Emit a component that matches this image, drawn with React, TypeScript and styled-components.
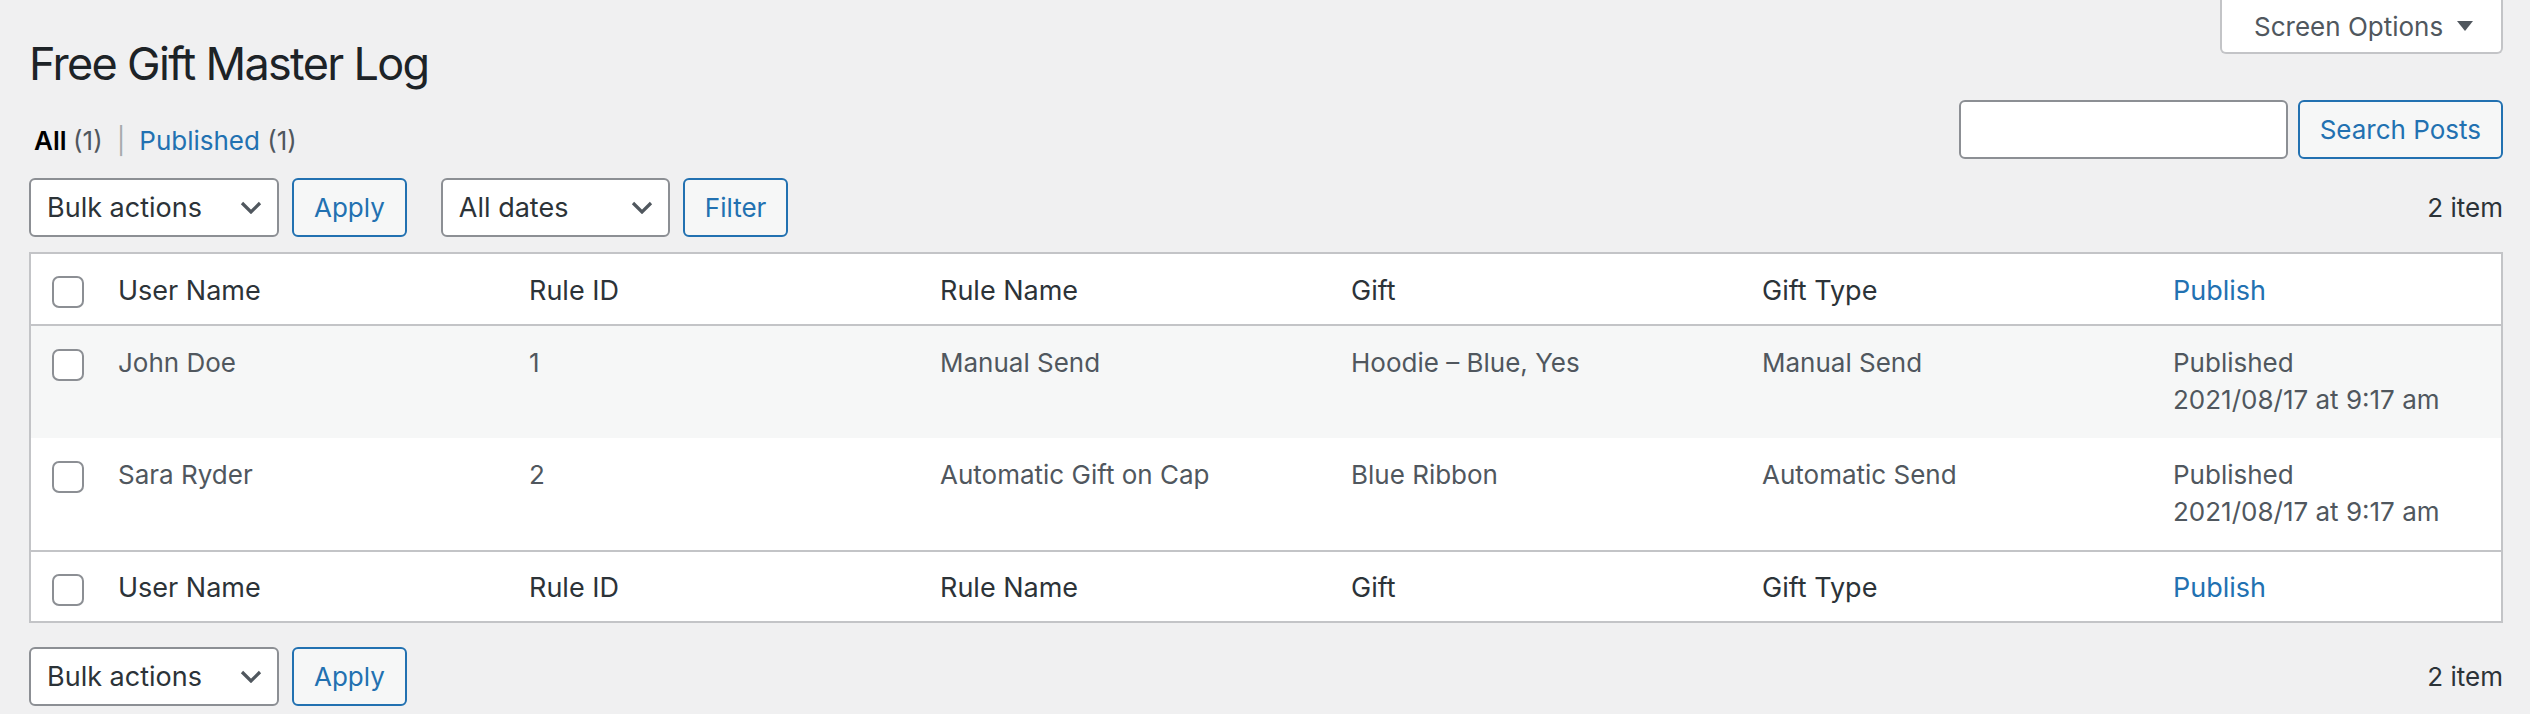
import React from "react";
import styled, { createGlobalStyle } from "styled-components";

const GlobalStyle = createGlobalStyle`
  html, body {
    margin: 0;
    padding: 0;
    background: #f0f0f1;
  }
  body {
    font-family: Inter, "Noto Sans", sans-serif;
    font-size: 26px;
    color: #3c434a;
  }
  * {
    box-sizing: border-box;
  }
`;

const Wrap = styled.div`
  padding: 0 27px 0 29px;
  min-height: 714px;
`;

const HeaderRow = styled.div`
  display: flex;
  justify-content: space-between;
  align-items: flex-start;
`;

const Title = styled.h1`
  margin: 0;
  padding-top: 35px;
  font-size: 45px;
  line-height: 58px;
  font-weight: 400;
  letter-spacing: -1.7px;
  color: #1d2327;
`;

const ScreenOptions = styled.button`
  display: flex;
  align-items: center;
  gap: 14px;
  width: 283px;
  height: 54px;
  padding: 0 0 0 32px;
  background: #fff;
  border: 2px solid #c3c4c7;
  border-top: none;
  border-radius: 0 0 6px 6px;
  font-family: inherit;
  font-size: 26px;
  line-height: 31px;
  color: #50575e;
  cursor: pointer;
`;

const SearchRow = styled.div`
  display: flex;
  justify-content: space-between;
  align-items: flex-start;
  margin-top: 7px;
`;

const Views = styled.ul`
  display: flex;
  margin: 0;
  padding: 23px 0 0 5px;
  list-style: none;
  line-height: 36px;
`;

const ViewItem = styled.li<{ $current?: boolean }>`
  color: ${(p) => (p.$current ? "#000" : "#2271b1")};
  font-weight: ${(p) => (p.$current ? 600 : 400)};
`;

const Count = styled.span`
  color: #50575e;
  font-weight: 400;
`;

const Sep = styled.span`
  margin: 0 14px;
  color: #a7aaad;
`;

const SearchBox = styled.div`
  display: flex;
  gap: 10px;
`;

const SearchInput = styled.input`
  width: 329px;
  height: 59px;
  border: 2px solid #8c8f94;
  border-radius: 6px;
  background: #fff;
  font-family: inherit;
  font-size: 26px;
  padding: 0 16px;
`;

const Button = styled.button`
  height: 59px;
  padding: 0 20px;
  border: 2px solid #2271b1;
  border-radius: 6px;
  background: #f6f7f7;
  color: #2271b1;
  font-family: inherit;
  font-size: 26px;
  cursor: pointer;
  white-space: nowrap;
`;

const TableNav = styled.div<{ $top?: boolean }>`
  display: flex;
  align-items: center;
  height: 59px;
  margin-top: ${(p) => (p.$top ? "19px" : "24px")};
`;

const Group = styled.div<{ $gapLeft?: number }>`
  display: flex;
  gap: 13px;
  margin-left: ${(p) => p.$gapLeft ?? 0}px;
`;

const Select = styled.div<{ $width: number }>`
  display: flex;
  align-items: center;
  justify-content: space-between;
  width: ${(p) => p.$width}px;
  height: 59px;
  padding: 0 15px 0 16px;
  border: 2px solid #8c8f94;
  border-radius: 6px;
  background: #fff;
  font-size: 27px;
  color: #2c3338;
`;

const ItemCount = styled.div`
  margin-left: auto;
  line-height: 39px;
  color: #2c3338;
`;

const Table = styled.table`
  width: 100%;
  margin-top: 15px;
  table-layout: fixed;
  border-collapse: separate;
  border-spacing: 0;
  background: #fff;
  border: 2px solid #c3c4c7;
`;

const HeadCell = styled.th<{ $foot?: boolean }>`
  padding: ${(p) => (p.$foot ? "18px" : "19px")} 20px 16px;
  text-align: left;
  font-size: 27px;
  line-height: 35px;
  font-weight: 400;
  color: #2c3338;
  vertical-align: top;
  border-bottom: ${(p) => (p.$foot ? "none" : "2px solid #c3c4c7")};
  border-top: ${(p) => (p.$foot ? "2px solid #c3c4c7" : "none")};
`;

const CheckHead = styled(HeadCell)`
  padding: 22px 0 0 21px;
`;

const SortLink = styled.span`
  color: #2271b1;
`;

const Row = styled.tr<{ $alt?: boolean }>`
  background: ${(p) => (p.$alt ? "#f6f7f7" : "#fff")};
`;

const Cell = styled.td`
  padding: 18px 20px 20px;
  font-size: 26px;
  line-height: 37px;
  color: #50575e;
  vertical-align: top;
`;

const CheckCell = styled.td`
  padding: 23px 0 0 21px;
  vertical-align: top;
`;

const Checkbox = styled.span`
  display: block;
  width: 32px;
  height: 32px;
  border: 2px solid #8c8f94;
  border-radius: 7px;
  background: #fff;
`;

const Chevron = () => (
  <svg width="22" height="13" viewBox="0 0 22 13" fill="none">
    <polyline points="2,2 11,11 20,2" stroke="#50575e" strokeWidth="3.2" />
  </svg>
);

const DownArrow = () => (
  <svg width="16" height="10" viewBox="0 0 16 10">
    <polygon points="0,0 16,0 8,10" fill="#50575e" />
  </svg>
);

const columns = ["User Name", "Rule ID", "Rule Name", "Gift", "Gift Type"];

const rows = [
  { user: "John Doe", id: "1", rule: "Manual Send", gift: "Hoodie – Blue, Yes", type: "Manual Send" },
  { user: "Sara Ryder", id: "2", rule: "Automatic Gift on Cap", gift: "Blue Ribbon", type: "Automatic Send" },
];

const HeaderCells = ({ foot }: { foot?: boolean }) => (
  <tr>
    <CheckHead $foot={foot}>
      <Checkbox />
    </CheckHead>
    {columns.map((c) => (
      <HeadCell key={c} $foot={foot}>
        {c}
      </HeadCell>
    ))}
    <HeadCell $foot={foot}>
      <SortLink>Publish</SortLink>
    </HeadCell>
  </tr>
);

const BulkActions = () => (
  <Group>
    <Select $width={250}>
      <span>Bulk actions</span>
      <Chevron />
    </Select>
    <Button>Apply</Button>
  </Group>
);

export default function App() {
  return (
    <>
      <GlobalStyle />
      <Wrap>
        <HeaderRow>
          <Title>Free Gift Master Log</Title>
          <ScreenOptions>
            Screen Options
            <DownArrow />
          </ScreenOptions>
        </HeaderRow>

        <SearchRow>
          <Views>
            <ViewItem $current>
              All <Count>(1)</Count>
            </ViewItem>
            <Sep>|</Sep>
            <ViewItem>
              Published <Count>(1)</Count>
            </ViewItem>
          </Views>
          <SearchBox>
            <SearchInput type="search" />
            <Button>Search Posts</Button>
          </SearchBox>
        </SearchRow>

        <TableNav $top>
          <BulkActions />
          <Group $gapLeft={34}>
            <Select $width={229}>
              <span>All dates</span>
              <Chevron />
            </Select>
            <Button>Filter</Button>
          </Group>
          <ItemCount>2 item</ItemCount>
        </TableNav>

        <Table>
          <colgroup>
            <col style={{ width: 67 }} />
            <col style={{ width: 411 }} />
            <col style={{ width: 411 }} />
            <col style={{ width: 411 }} />
            <col style={{ width: 411 }} />
            <col style={{ width: 411 }} />
            <col />
          </colgroup>
          <thead>
            <HeaderCells />
          </thead>
          <tbody>
            {rows.map((r, i) => (
              <Row key={r.user} $alt={i % 2 === 0}>
                <CheckCell>
                  <Checkbox />
                </CheckCell>
                <Cell>{r.user}</Cell>
                <Cell>{r.id}</Cell>
                <Cell>{r.rule}</Cell>
                <Cell>{r.gift}</Cell>
                <Cell>{r.type}</Cell>
                <Cell>
                  Published
                  <br />
                  2021/08/17 at 9:17 am
                </Cell>
              </Row>
            ))}
          </tbody>
          <tfoot>
            <HeaderCells foot />
          </tfoot>
        </Table>

        <TableNav>
          <BulkActions />
          <ItemCount>2 item</ItemCount>
        </TableNav>
      </Wrap>
    </>
  );
}
